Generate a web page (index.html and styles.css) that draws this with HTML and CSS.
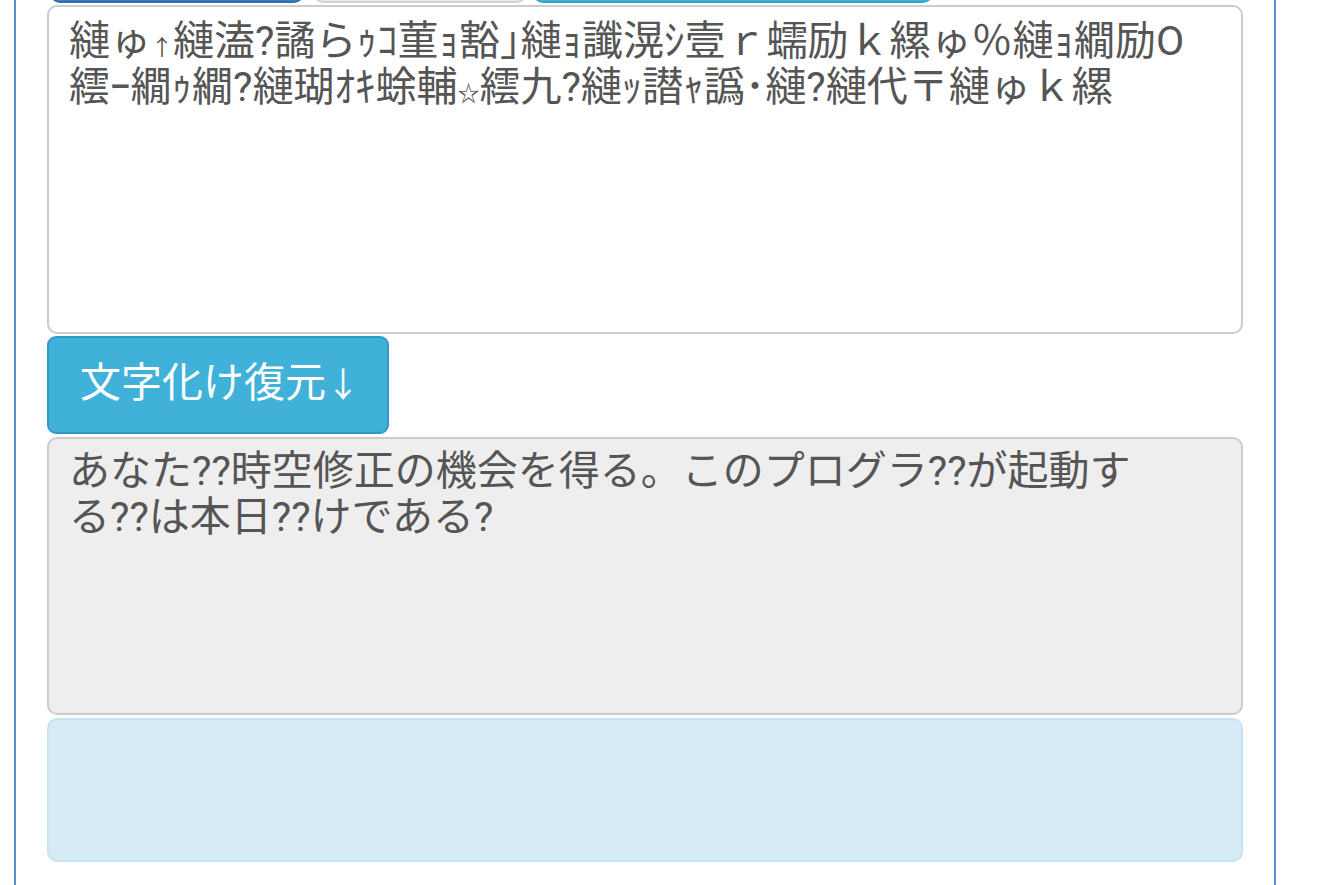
FILE: index.html
```html
<!DOCTYPE html>
<html lang="ja">
<head>
<meta charset="utf-8">
<title>文字化け復元</title>
<link rel="stylesheet" href="styles.css">
</head>
<body>
<div class="panel">
  <div class="tabs">
    <span class="tab tab-primary"></span>
    <span class="tab tab-default"></span>
    <span class="tab tab-info"></span>
  </div>
  <div class="box box-src">縺ゅ<span class="sym">↑</span>縺溘?譎らｩｺ菫ｮ豁｣縺ｮ讖滉ｼ壹ｒ蠕励ｋ縲ゅ％縺ｮ繝励Ο繧ｰ繝ｩ繝?縺瑚ｵｷ蜍輔<span class="sym">☆</span>繧九?縺ｯ譛ｬ譌･縺?縺代〒縺ゅｋ縲</div>
  <div class="actions">
    <button class="btn-restore" type="button">文字化け復元<span class="arrow">↓</span></button>
  </div>
  <div class="box box-out">あなた??時空修正の機会を得る。このプログラ??が起動する??は本日??けである?</div>
  <div class="box box-result"></div>
</div>
</body>
</html>
```

FILE: styles.css
```css
html, body {
  margin: 0;
  padding: 0;
  background: #ffffff;
}

body {
  width: 1320px;
  height: 885px;
  overflow: hidden;
  font-family: Roboto, "Noto Sans CJK JP", sans-serif;
}

.panel {
  box-sizing: border-box;
  width: 1262px;
  margin-left: 14px;
  margin-top: -95px;
  padding: 0 30px 40px 31px;
  border-left: 2px solid #5a8fcb;
  border-right: 2px solid #5a8fcb;
  min-height: 1100px;
}

.tabs {
  display: flex;
  height: 98px;
}

.tab {
  box-sizing: border-box;
  display: block;
  height: 98px;
  border-radius: 10px;
}

.tab-primary {
  width: 254px;
  margin-left: 3px;
  background: #3c7dc1;
  border: 2px solid #2f6eaa;
}

.tab-default {
  width: 214px;
  margin-left: 9px;
  background: #ececec;
  border: 2px solid #d2d2d2;
}

.tab-info {
  width: 400px;
  margin-left: 6px;
  background: #46b2da;
  border: 2px solid #35a4cd;
}

.box {
  box-sizing: border-box;
  width: 1196px;
  border: 2px solid #cccccc;
  border-radius: 10px;
  padding: 11px 40px 8px 20px;
  font-family: Roboto, "Noto Sans CJK JP", sans-serif;
  font-size: 41px;
  line-height: 46px;
  color: #555555;
  word-break: break-all;
}

.sym {
  font-family: "Noto Sans CJK JP", sans-serif;
  font-size: 22px;
  line-height: 0;
}

.box-src {
  margin-top: 2px;
  height: 329px;
  background: #ffffff;
}

.actions {
  display: flex;
  padding-top: 2px;
}

.btn-restore {
  box-sizing: border-box;
  height: 98px;
  width: 342px;
  padding: 0 0 2px 4px;
  background: #40b1d9;
  border: 2px solid #2c9cc6;
  border-radius: 9px;
  color: #ffffff;
  font-family: Roboto, "Noto Sans CJK JP", sans-serif;
  font-size: 41px;
  line-height: 46px;
  text-align: center;
}

.arrow {
  font-size: 34px;
}

.box-out {
  margin-top: 3px;
  height: 278px;
  padding-top: 9px;
  background: #eeeeee;
  word-break: normal;
}

.box-result {
  margin-top: 3px;
  height: 144px;
  background: #d6ebf5;
  border-color: #c6e3f1;
}
```
